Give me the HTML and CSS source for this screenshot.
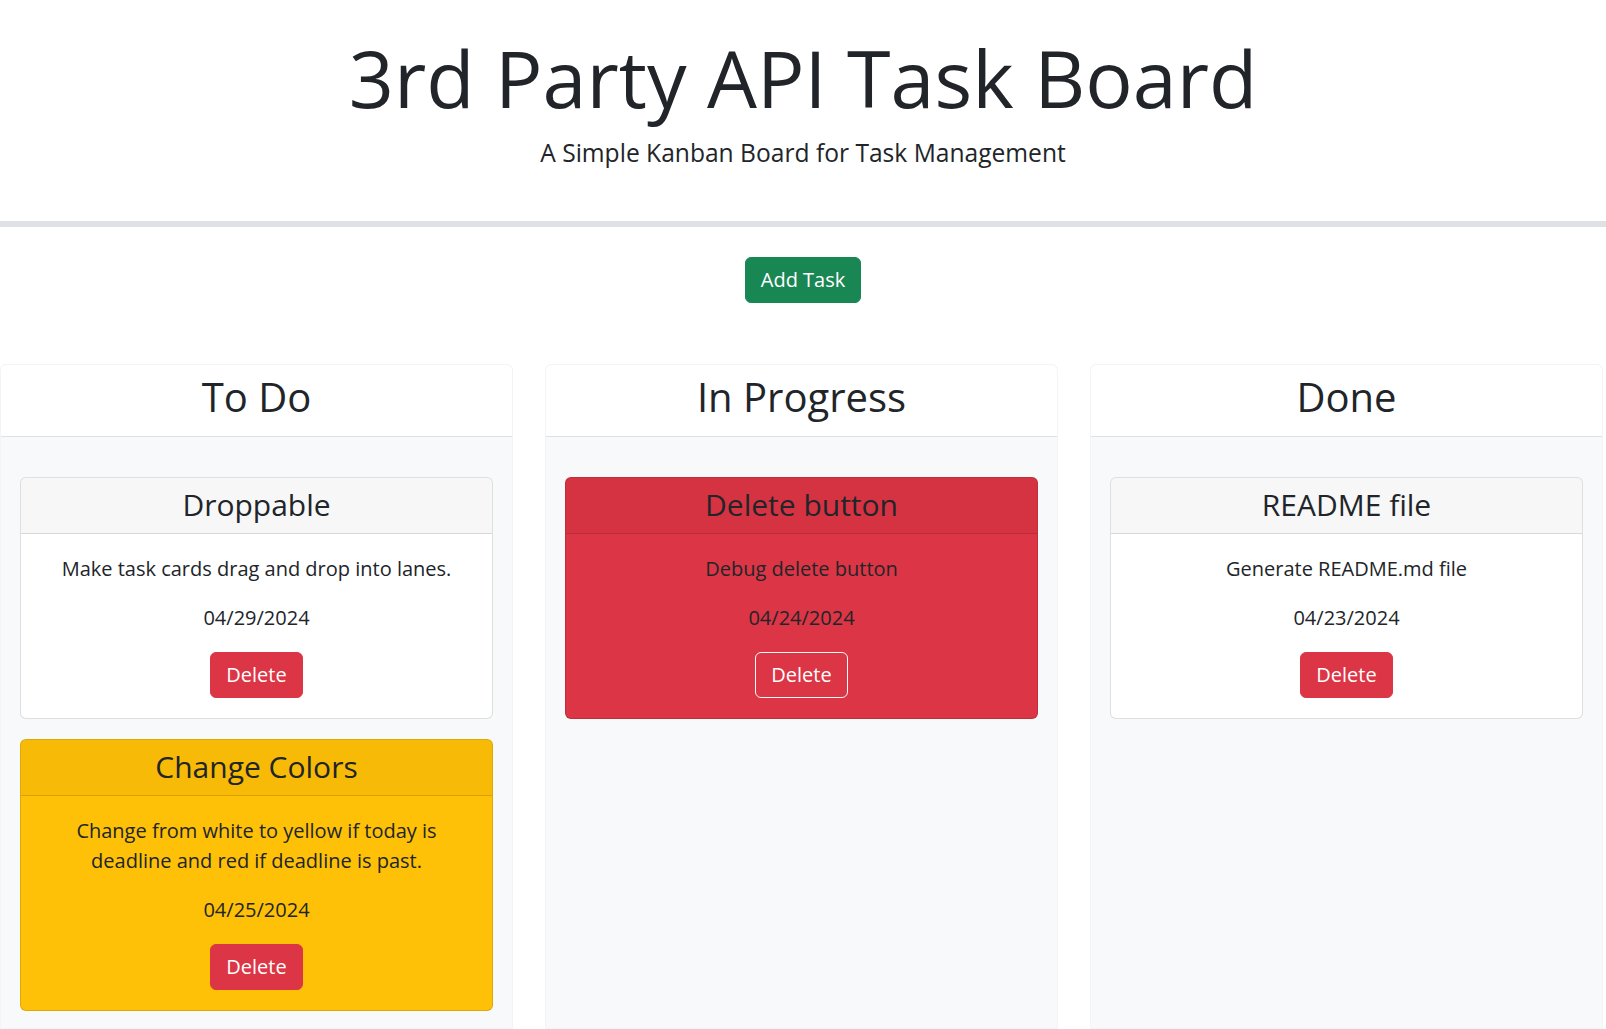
FILE: index.html
```html
<!DOCTYPE html>
<html lang="en">
<head>
<meta charset="utf-8">
<title>3rd Party API Task Board</title>
<link rel="stylesheet" href="styles.css">
</head>
<body>
<div class="page">
  <header class="hero">
    <h1 class="hero-title">3rd Party API Task Board</h1>
    <p class="hero-lead">A Simple Kanban Board for Task Management</p>
  </header>

  <div class="actions">
    <button class="btn btn-add" type="button">Add Task</button>
  </div>

  <main class="board">
    <section class="lane">
      <div class="lane-header"><h2 class="lane-title">To Do</h2></div>
      <div class="lane-body">
        <div class="task">
          <div class="task-header"><h4 class="task-title">Droppable</h4></div>
          <div class="task-body">
            <p class="task-text">Make task cards drag and drop into lanes.</p>
            <p class="task-text">04/29/2024</p>
            <button class="btn btn-delete" type="button">Delete</button>
          </div>
        </div>
        <div class="task task-warning">
          <div class="task-header"><h4 class="task-title">Change Colors</h4></div>
          <div class="task-body">
            <p class="task-text">Change from white to yellow if today is deadline and red if deadline is past.</p>
            <p class="task-text">04/25/2024</p>
            <button class="btn btn-delete" type="button">Delete</button>
          </div>
        </div>
      </div>
    </section>

    <section class="lane">
      <div class="lane-header"><h2 class="lane-title">In Progress</h2></div>
      <div class="lane-body">
        <div class="task task-danger">
          <div class="task-header"><h4 class="task-title">Delete button</h4></div>
          <div class="task-body">
            <p class="task-text">Debug delete button</p>
            <p class="task-text">04/24/2024</p>
            <button class="btn btn-delete btn-delete-outline" type="button">Delete</button>
          </div>
        </div>
      </div>
    </section>

    <section class="lane">
      <div class="lane-header"><h2 class="lane-title">Done</h2></div>
      <div class="lane-body">
        <div class="task">
          <div class="task-header"><h4 class="task-title">README file</h4></div>
          <div class="task-body">
            <p class="task-text">Generate README.md file</p>
            <p class="task-text">04/23/2024</p>
            <button class="btn btn-delete" type="button">Delete</button>
          </div>
        </div>
      </div>
    </section>
  </main>
</div>
</body>
</html>
```

FILE: styles.css
```css
* {
  box-sizing: border-box;
}

html,
body {
  margin: 0;
  padding: 0;
}

body {
  font-family: "Open Sans", "Noto Sans", sans-serif;
  font-size: 20px;
  line-height: 1.5;
  color: #212529;
  background: #ffffff;
}

.page {
  height: 100vh;
  display: flex;
  flex-direction: column;
}

/* Header */
.hero {
  padding: 30px 0 49px;
  text-align: center;
  border-bottom: 6px solid #dee2e6;
}

.hero-title {
  margin: 0 0 8px;
  font-size: 79px;
  line-height: 96px;
  font-weight: 400;
}

.hero-lead {
  margin: 0;
  font-size: 24.6px;
  line-height: 37.5px;
  font-weight: 400;
}

/* Add task */
.actions {
  display: flex;
  justify-content: center;
  padding: 30px 0 61px;
}

.btn {
  font-family: inherit;
  font-size: 20px;
  line-height: 30px;
  padding: 7px 15px;
  border: 1px solid transparent;
  border-radius: 6px;
  color: #ffffff;
  cursor: pointer;
}

.btn-add {
  background: #198754;
  border-color: #198754;
}

.btn-delete {
  background: #dc3545;
  border-color: #dc3545;
}

.btn-delete-outline {
  border-color: #f8f9fa;
}

/* Board */
.board {
  flex: 1;
  min-height: 0;
  display: flex;
  gap: 32px;
}

.lane {
  width: 513px;
  flex: 0 0 513px;
  display: flex;
  flex-direction: column;
  border: 1px solid #f3f4f5;
  border-radius: 6px 6px 0 0;
  background: #f8f9fa;
}

.lane-header {
  background: #ffffff;
  border-bottom: 1px solid #dee2e6;
  border-radius: 6px 6px 0 0;
  padding: 8px 20px 15px;
  text-align: center;
}

.lane-title {
  margin: 0;
  font-size: 40px;
  line-height: 48px;
  font-weight: 400;
}

.lane-body {
  flex: 1;
  padding: 40px 19px 0;
}

/* Task cards */
.task {
  background: #ffffff;
  border: 1px solid rgba(0, 0, 0, 0.125);
  border-radius: 6px;
  margin-bottom: 20px;
  overflow: hidden;
}

.task-warning {
  background: #ffc107;
}

.task-danger {
  background: #dc3545;
}

.task-header {
  background: rgba(0, 0, 0, 0.03);
  border-bottom: 1px solid rgba(0, 0, 0, 0.125);
  padding: 9px 20px 10px;
  text-align: center;
}

.task-title {
  margin: 0;
  font-size: 30px;
  line-height: 36px;
  font-weight: 400;
}

.task-body {
  padding: 20px;
  text-align: center;
}

.task-text {
  margin: 0 0 19px;
}
```
